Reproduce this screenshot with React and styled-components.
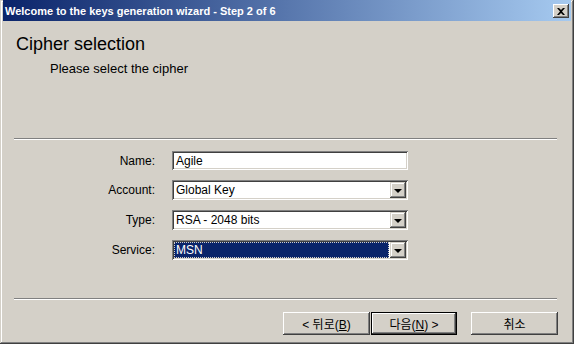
import React from 'react';
import styled, { createGlobalStyle } from 'styled-components';

const Global = createGlobalStyle`
    html, body {
        margin: 0;
        padding: 0;
        background: #d4d0c8;
    }
    * {
        box-sizing: border-box;
    }
`

const UI_FONT = `"Liberation Sans", Arial, "Noto Sans CJK KR", sans-serif`;

const Window = styled.div`
    width: 574px;
    height: 344px;
    display: flex;
    flex-direction: column;
    background: #d4d0c8;
    font-family: ${UI_FONT};
    font-size: 12px;
    color: #000;
    box-shadow: inset -1px -1px #404040, inset 1px 1px #d4d0c8,
        inset -2px -2px #808080, inset 2px 2px #ffffff;
    overflow: hidden;
`

const TitleBar = styled.div`
    height: 21px;
    margin: 0 3px;
    display: flex;
    align-items: center;
    justify-content: space-between;
    padding: 0 2px 0 2px;
    background: linear-gradient(to right, #0a246a, #a6caf0);
    color: #fff;
    font-weight: bold;
    font-size: 11px;
`

const CloseButton = styled.span`
    width: 16px;
    height: 14px;
    display: flex;
    align-items: center;
    justify-content: center;
    margin-top: 1px;
    background: #d4d0c8;
    box-shadow: inset -1px -1px #404040, inset 1px 1px #ffffff,
        inset -2px -2px #808080;
`

const Header = styled.div`
    height: 117px;
    padding: 13px 0 0 16px;
    h1 {
        margin: 0;
        font-size: 18px;
        font-weight: normal;
        line-height: 21px;
    }
    p {
        margin: 6px 0 0 34px;
        font-size: 13px;
        line-height: 15px;
    }
`

const Separator = styled.div`
    height: 2px;
    margin: 0 17px 0 14px;
    border-top: 1px solid #808080;
    border-bottom: 1px solid #ffffff;
`

const Form = styled.div`
    height: 158px;
    display: grid;
    grid-template-columns: 155px 236px;
    column-gap: 17px;
    row-gap: 10px;
    align-content: start;
    align-items: center;
    padding-top: 11px;
`

const Label = styled.label`
    text-align: right;
    line-height: 14px;
`

const Field = styled.div`
    position: relative;
    height: ${p => (p.$select ? 20 : 19)}px;
    display: flex;
    align-items: center;
    padding: 2px;
    background: #fff;
    box-shadow: inset 1px 1px #808080, inset -1px -1px #ffffff,
        inset 2px 2px #404040, inset -2px -2px #d4d0c8;
`

const Value = styled.span`
    flex: 1;
    align-self: stretch;
    display: flex;
    align-items: center;
    padding-left: 2px;
    margin-right: 1px;
    background: ${p => (p.$focused ? '#0a246a' : 'transparent')};
    color: ${p => (p.$focused ? '#fff' : '#000')};
    outline: ${p => (p.$focused ? '1px dotted #d4d0c8' : 'none')};
    outline-offset: -1px;
`

const DropButton = styled.span`
    width: 16px;
    align-self: stretch;
    display: flex;
    align-items: center;
    justify-content: center;
    background: #d4d0c8;
    box-shadow: inset -1px -1px #404040, inset 1px 1px #d4d0c8,
        inset -2px -2px #808080, inset 2px 2px #ffffff;
    &::after {
        content: '';
        border-left: 4px solid transparent;
        border-right: 4px solid transparent;
        border-top: 4px solid #000;
        margin-top: 1px;
    }
`

const Footer = styled.div`
    flex: 1;
    display: flex;
    align-items: flex-start;
    padding: 12px 0 0 283px;
`

const Button = styled.button`
    width: ${p => (p.$default ? 86 : 87)}px;
    height: 23px;
    padding: 0;
    margin: ${p => (p.$default ? '0 0 0 1px' : '0')};
    font-family: ${UI_FONT};
    font-size: 12px;
    color: #000;
    background: #d4d0c8;
    border: ${p => (p.$default ? '1px solid #000' : 'none')};
    box-shadow: inset -1px -1px #404040, inset 1px 1px #ffffff,
        inset -2px -2px #808080, inset 2px 2px #d4d0c8;
    u {
        text-decoration: underline;
    }
`

const Spacer = styled.span`
    width: ${p => p.$w}px;
`

const fields = [
    { label: 'Name:', value: 'Agile' },
    { label: 'Account:', value: 'Global Key', select: true },
    { label: 'Type:', value: 'RSA - 2048 bits', select: true },
    { label: 'Service:', value: 'MSN', select: true, focused: true },
];

export default function App() {
    return (
        <Window>
            <Global />
            <TitleBar>
                <span>Welcome to the keys generation wizard - Step 2 of 6</span>
                <CloseButton>
                    <svg width="8" height="7" viewBox="0 0 8 7">
                        <path d="M0 0h2l2 2 2-2h2L5 3.5 8 7H6L4 5 2 7H0l3-3.5z" fill="#000" />
                    </svg>
                </CloseButton>
            </TitleBar>
            <Header>
                <h1>Cipher selection</h1>
                <p>Please select the cipher</p>
            </Header>
            <Separator />
            <Form>
                {fields.map(f => (
                    <React.Fragment key={f.label}>
                        <Label>{f.label}</Label>
                        <Field $select={f.select}>
                            <Value $focused={f.focused}>{f.value}</Value>
                            {f.select && <DropButton />}
                        </Field>
                    </React.Fragment>
                ))}
            </Form>
            <Separator />
            <Footer>
                <Button>&lt; 뒤로(<u>B</u>)</Button>
                <Button $default>다음(<u>N</u>) &gt;</Button>
                <Spacer $w={14} />
                <Button>취소</Button>
            </Footer>
        </Window>
    );
}
